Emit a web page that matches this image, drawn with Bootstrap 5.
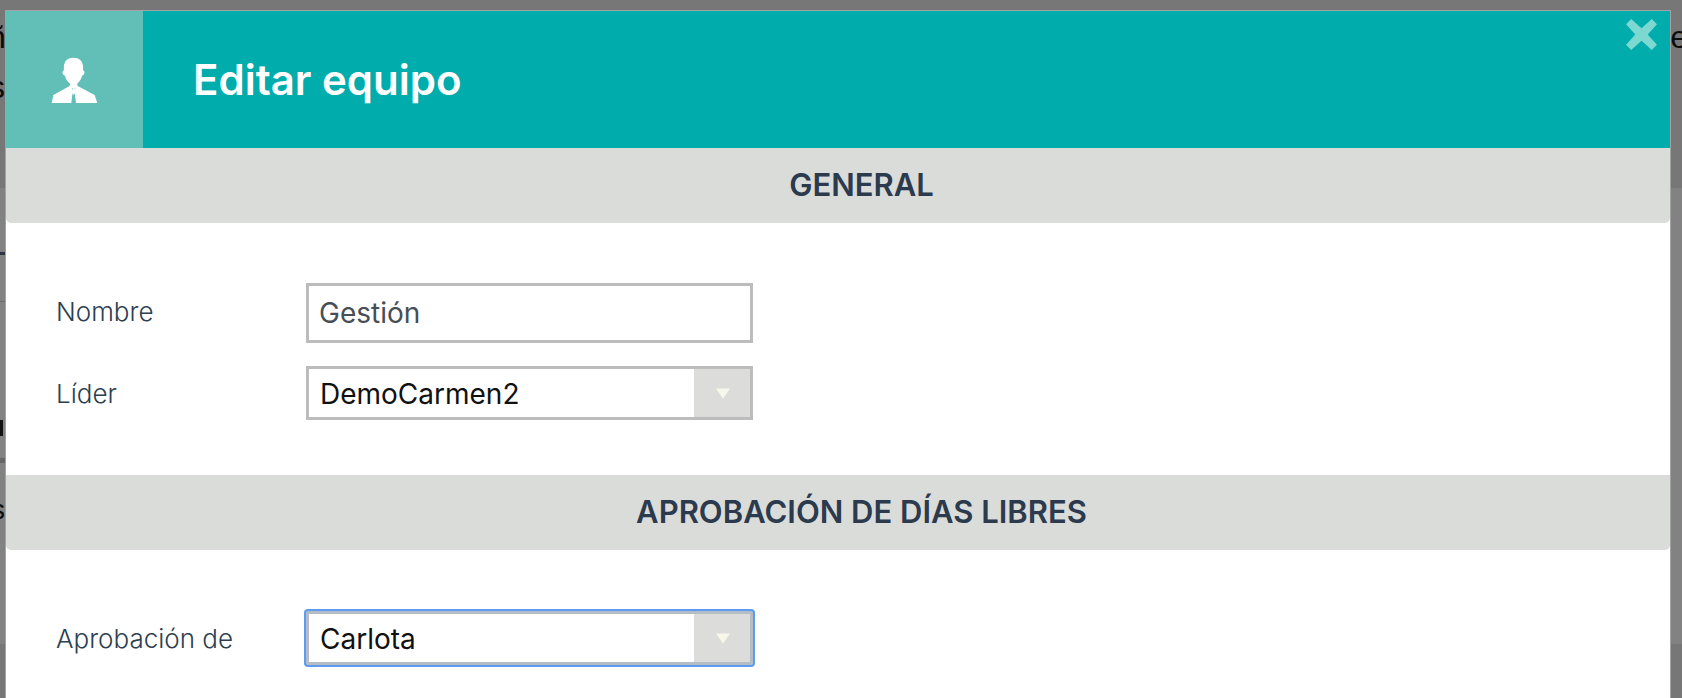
<!DOCTYPE html>
<html lang="es">
<head>
<meta charset="utf-8">
<title>Editar equipo</title>
<link href="https://cdn.jsdelivr.net/npm/bootstrap@5.3.0/dist/css/bootstrap.min.css" rel="stylesheet">
<style>
html,body{height:698px;overflow:hidden;background:#777}
body{font-family:"Inter","Lato","Liberation Sans",sans-serif;position:relative;margin:0}
.under-top{height:188px;padding-top:12px;background:#777}
.under-mid{height:456px;background:#828282}
.under-end{height:54px;background:#777}
.under-line{height:50px;font:32px/50px "Liberation Sans",sans-serif;color:#0c0c0c;overflow:hidden}
.under-n{margin-left:-12px}.under-e{margin-right:-6px}.under-s{margin-left:-11px}
.under-s2{margin-left:-9px;font-size:28px}
.under-dash{height:3px;width:5px;margin-top:64px;background:#2b3543}
.under-rule{height:1px;width:5px;margin-top:46px;background:#6c6c6c}
.under-black{height:16px;width:3px;margin-top:118px;background:#111}
.under-bar{height:5px;width:5px;margin-top:22px;background:#666}
.under-low{margin-top:30px;height:30px;line-height:30px}
.modal-sheet{position:absolute;top:10px;left:5px;width:1666px;height:700px;background:#fff;border:1px solid #a3a3a3;border-bottom:0}
.sheet-head{height:137px;background:#00acac}
.sheet-icon{width:137px;background:#61bfb7}
.sheet-title{margin:0 0 0 50px;font-size:42px;font-weight:600;color:#fff;line-height:1}
.sheet-close{top:7px;right:12px;width:33px;height:33px;padding:0;border:0;background:none;display:block}
.sheet-band{height:75px;padding-left:47px;background:#dadcd9;border-radius:0 0 5px 5px;color:#2c3a4e;font-size:31px;font-weight:600;text-transform:uppercase}
.sheet-body{padding:60px 0 55px 50px}
.sheet-label{width:250px;font-size:26px;font-weight:300;color:#2c3e50;margin:0}
.sheet-input{width:447px;height:60px;border:3px solid #bcbcbc;border-radius:0;padding:0 10px;font-size:28px;color:#474e55;box-shadow:none}
.sheet-select{width:447px;height:54px;border:3px solid #bcbcbc;background:#fff;font-size:28px;color:#111}
.sheet-select.is-focused{border-color:#b4bcc6;border-radius:2px;box-shadow:0 0 0 2px #5d9bf0}
.sheet-value{padding:1px 0 0 11px}
.sheet-caret{width:56px;padding-left:2px;background:#dcdcda}
.row-gap{margin-top:23px}
.body-second{padding-top:61px}
</style>
</head>
<body>
<div aria-hidden="true">
  <div class="under-top">
    <div class="under-line d-flex justify-content-between"><span class="under-n">ñ</span><span class="under-e">e</span></div>
    <div class="under-line"><span class="under-s d-inline-block">s</span></div>
  </div>
  <div class="under-mid overflow-hidden">
    <div class="under-dash"></div>
    <div class="under-rule"></div>
    <div class="under-black"></div>
    <div class="under-bar"></div>
    <div class="under-line under-low"><span class="under-s2 d-inline-block">s</span></div>
  </div>
  <div class="under-end"></div>
</div>

<div class="modal-sheet" role="dialog">
  <header class="sheet-head d-flex align-items-center position-relative">
    <div class="sheet-icon h-100 d-flex align-items-center justify-content-center">
      <svg width="49" height="49" viewBox="90 10 145 145" aria-hidden="true">
        <path fill="#fff" fill-rule="evenodd" d="M159 18C176 18 187 27 188 45L188 56C192 56 193 62 191 66C189 70 187 71 185 71C183 82 177 90 170 96L172 102L222 128L230 152L95 152L100 128L148 102L150 96C142 90 136 82 134 71C132 71 130 70 128 66C126 62 127 56 131 56L131 45C132 27 143 18 159 18ZM155 108L157 120L153 152L167 152L163 120L165 108Z"/>
        <path fill="#fff" d="M157 108L163 108L165 122L160 128L155 122Z"/>
      </svg>
    </div>
    <h1 class="sheet-title">Editar equipo</h1>
    <button class="sheet-close position-absolute" type="button" aria-label="Cerrar">
      <svg width="33" height="33" viewBox="0 0 32 32" aria-hidden="true"><path fill="#7ed8d2" d="M6 1L16 10L26 1L31 6L22 16L31 26L26 31L16 22L6 31L1 26L10 16L1 6Z"/></svg>
    </button>
  </header>

  <div class="sheet-band d-flex align-items-center justify-content-center">General</div>
  <div class="sheet-body">
    <div class="d-flex align-items-center">
      <label class="sheet-label pb-1" for="nombre">Nombre</label>
      <input id="nombre" class="form-control sheet-input" type="text" value="Gestión">
    </div>
    <div class="d-flex align-items-center row-gap">
      <span class="sheet-label">Líder</span>
      <div class="sheet-select d-flex justify-content-between align-items-stretch">
        <span class="sheet-value d-flex align-items-center">DemoCarmen2</span>
        <span class="sheet-caret d-flex align-items-center justify-content-center"><svg width="14" height="11" viewBox="0 0 14 10" aria-hidden="true"><path fill="#f8f8ea" d="M0 0H14L7 10Z"/></svg></span>
      </div>
    </div>
  </div>

  <div class="sheet-band d-flex align-items-center justify-content-center">Aprobación de días libres</div>
  <div class="sheet-body body-second">
    <div class="d-flex align-items-center">
      <span class="sheet-label">Aprobación de</span>
      <div class="sheet-select is-focused d-flex justify-content-between align-items-stretch">
        <span class="sheet-value d-flex align-items-center">Carlota</span>
        <span class="sheet-caret d-flex align-items-center justify-content-center"><svg width="14" height="11" viewBox="0 0 14 10" aria-hidden="true"><path fill="#f8f8ea" d="M0 0H14L7 10Z"/></svg></span>
      </div>
    </div>
  </div>
</div>
<script src="https://cdn.jsdelivr.net/npm/bootstrap@5.3.0/dist/js/bootstrap.bundle.min.js"></script>
</body>
</html>
